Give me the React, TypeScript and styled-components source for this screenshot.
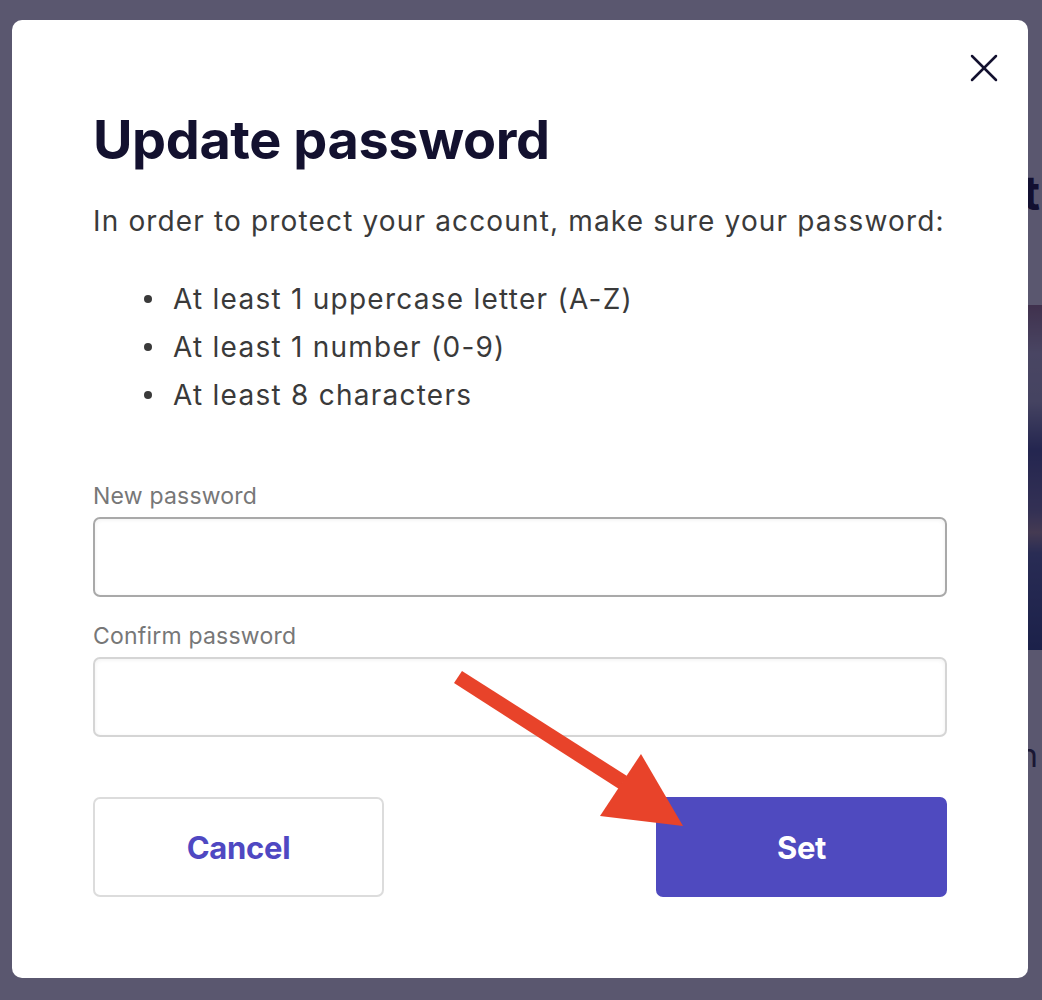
import React from 'react';
import styled, { createGlobalStyle } from 'styled-components';
import { X } from 'lucide-react';

const GlobalStyle = createGlobalStyle`
  * { box-sizing: border-box; }
  body {
    margin: 0;
    background: #ffffff;
    font-family: Inter, "Noto Sans", sans-serif;
  }
`;

const Page = styled.div`
  height: 1000px;
  overflow: hidden;
  display: flex;
  justify-content: flex-end;
`;

const SideColumn = styled.div`
  width: 420px;
  padding-top: 164px;
  display: flex;
  flex-direction: column;
  align-items: flex-end;
`;

const SideHeading = styled.h2`
  margin: 0;
  font-size: 48px;
  line-height: 58px;
  font-weight: 700;
  color: #13112f;
  margin-right: 2px;
  white-space: nowrap;
`;

const SideImage = styled.div`
  margin-top: 83px;
  width: 100%;
  height: 345px;
  background: linear-gradient(
    180deg,
    #a7808f 0%,
    #c6c3d5 14%,
    #b8bcd0 28%,
    #4a5a96 42%,
    #7f7fa6 60%,
    #b79f9f 66%,
    #5b6fa6 72%,
    #2e4a82 100%
  );
`;

const SideCaption = styled.p`
  margin: 86px 4px 0 0;
  font-size: 32px;
  line-height: 40px;
  color: #2a2a3a;
  white-space: nowrap;
`;

const Backdrop = styled.div`
  position: fixed;
  inset: 0;
  background: rgba(20, 16, 50, 0.7);
  display: flex;
  padding: 20px 14px 22px 12px;
`;

const Modal = styled.div`
  position: relative;
  flex: 1;
  background: #ffffff;
  border-radius: 10px;
  padding: 88px 81px 80px 81px;
  display: flex;
  flex-direction: column;
`;

const CloseButton = styled.button`
  position: absolute;
  top: 24px;
  right: 20px;
  width: 48px;
  height: 48px;
  padding: 0;
  border: none;
  background: none;
  display: flex;
  align-items: center;
  justify-content: center;
  cursor: pointer;
`;

const Title = styled.h1`
  margin: 0;
  font-size: 54px;
  line-height: 64px;
  font-weight: 700;
  letter-spacing: -0.4px;
  color: #13112f;
`;

const Intro = styled.p`
  margin: 29px 0 0;
  font-size: 28px;
  line-height: 40px;
  letter-spacing: 1.15px;
  color: #3a3a3a;
  white-space: nowrap;
`;

const Rules = styled.ul`
  margin: 34px 0 0;
  padding: 0 0 0 80px;
  list-style: none;
`;

const Rule = styled.li`
  position: relative;
  font-size: 28px;
  line-height: 48px;
  letter-spacing: 1.25px;
  color: #3a3a3a;

  &::before {
    content: '';
    position: absolute;
    left: -29px;
    top: 20px;
    width: 8px;
    height: 8px;
    border-radius: 50%;
    background: #3a3a3a;
  }
`;

const Field = styled.label<{ $gap: number }>`
  display: flex;
  flex-direction: column;
  gap: 6px;
  margin-top: ${(p) => p.$gap}px;
`;

const FieldLabel = styled.span`
  font-size: 23px;
  line-height: 30px;
  letter-spacing: 0.2px;
  color: #777777;
`;

const Input = styled.input<{ $strong?: boolean }>`
  height: 80px;
  width: 100%;
  border: 2px solid ${(p) => (p.$strong ? '#a9a9a9' : '#d5d5d5')};
  border-radius: 7px;
  box-shadow: inset 0 1px 4px rgba(0, 0, 0, 0.06);
  font-family: inherit;
  font-size: 26px;
  padding: 0 16px;
  outline: none;
`;

const Actions = styled.div`
  margin-top: 60px;
  display: flex;
  justify-content: space-between;
`;

const ActionButton = styled.button<{ $primary?: boolean }>`
  width: 291px;
  height: 100px;
  border-radius: 7px;
  font-family: inherit;
  font-size: 31px;
  font-weight: 700;
  letter-spacing: -0.3px;
  cursor: pointer;
  border: 2px solid ${(p) => (p.$primary ? '#4f4abf' : '#dcdcdc')};
  background: ${(p) => (p.$primary ? '#4f4abf' : '#ffffff')};
  color: ${(p) => (p.$primary ? '#ffffff' : '#4f48c2')};
`;

const Annotation = styled.svg`
  position: fixed;
  inset: 0;
  width: 1042px;
  height: 1000px;
  pointer-events: none;
`;

const App: React.FC = () => {
  return (
    <>
      <GlobalStyle />
      <Page>
        <SideColumn>
          <SideHeading>Secure your account</SideHeading>
          <SideImage />
          <SideCaption>Learn more about protection</SideCaption>
        </SideColumn>
      </Page>

      <Backdrop>
        <Modal>
          <CloseButton aria-label="Close">
            <X size={48} strokeWidth={1.25} color="#13112f" />
          </CloseButton>

          <Title>Update password</Title>
          <Intro>In order to protect your account, make sure your password:</Intro>

          <Rules>
            <Rule>At least 1 uppercase letter (A-Z)</Rule>
            <Rule>At least 1 number (0-9)</Rule>
            <Rule>At least 8 characters</Rule>
          </Rules>

          <Field $gap={62}>
            <FieldLabel>New password</FieldLabel>
            <Input type="password" $strong />
          </Field>

          <Field $gap={24}>
            <FieldLabel>Confirm password</FieldLabel>
            <Input type="password" />
          </Field>

          <Actions>
            <ActionButton>Cancel</ActionButton>
            <ActionButton $primary>Set</ActionButton>
          </Actions>
        </Modal>
      </Backdrop>

      <Annotation viewBox="0 0 1042 1000">
        <polygon points="454,683 462,671 627,776 619,789" fill="#e8432a" />
        <polygon points="641,754 600,816 683,826" fill="#e8432a" />
      </Annotation>
    </>
  );
};

export default App;
